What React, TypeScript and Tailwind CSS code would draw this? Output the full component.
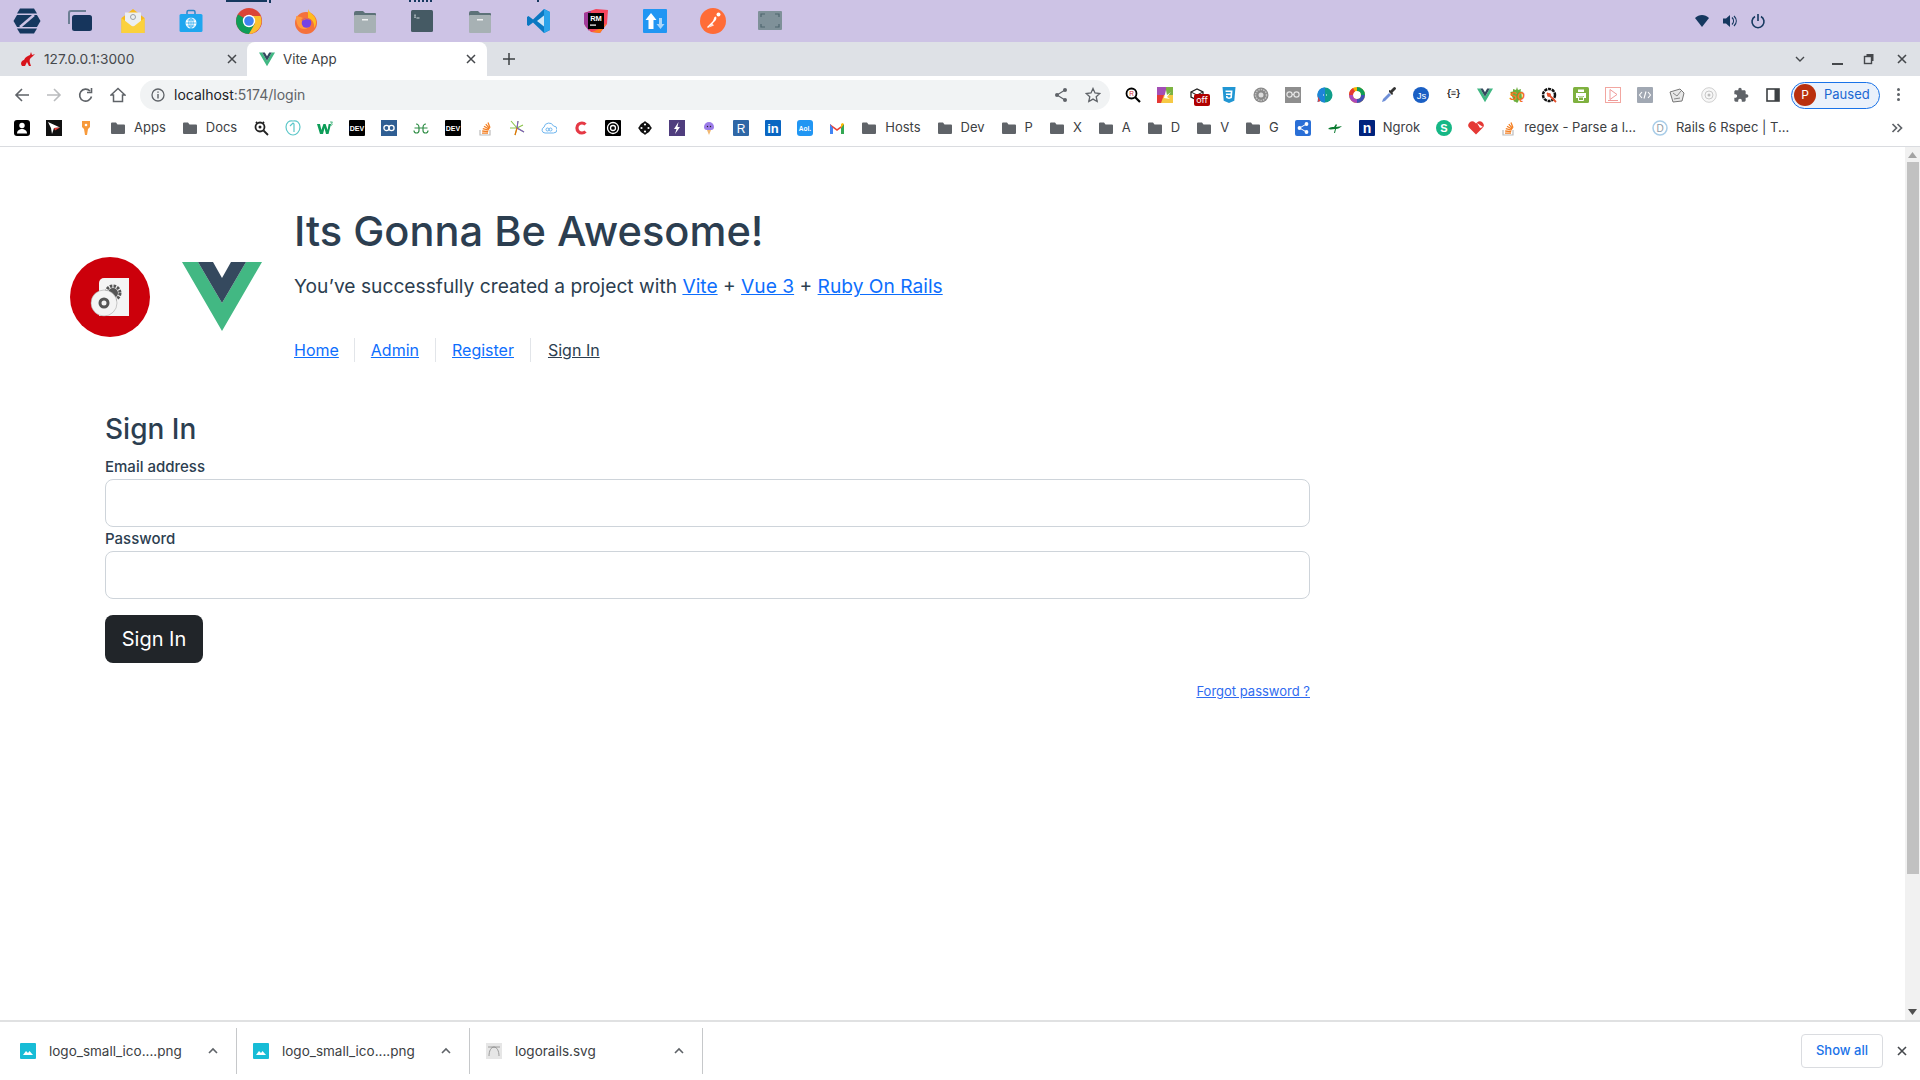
import React from "react";

const S = ({ children, s = 16, v = 16, className = "" }: { children: React.ReactNode; s?: number; v?: number; className?: string }) => (
  <svg width={s} height={s} viewBox={`0 0 ${v} ${v}`} className={"shrink-0 " + className}>{children}</svg>
);

const Folder = () => (
  <S><path d="M1 3.500a1 1 0 0 1 1-1h4l1.500 2H14a1 1 0 0 1 1 1V13a1 1 0 0 1-1 1H2a1 1 0 0 1-1-1z" fill="#5f6368" /></S>
);

const VueMark = ({ s = 16 }: { s?: number }) => (
  <S s={s} v={16}>
    <path d="M0 1.500h3.200L8 9.800l4.800-8.300H16L8 15.300z" fill="#41b883" />
    <path d="M3.200 1.500h2.600L8 5.300l2.200-3.800h2.600L8 9.800z" fill="#34495e" />
  </S>
);

const StackO = () => (
  <S>
    <path d="M3 10v5h10v-5" fill="none" stroke="#bcbbbb" strokeWidth="1.200" />
    <path d="M5 13.200h6M5.200 11l6 .6M5.800 8.600l5.800 1.600M7 6.200l5.200 3M8.800 4.200l3.800 4.400M11 2.400l2 5.400" stroke="#f48024" strokeWidth="1.300" fill="none" />
  </S>
);

const dockWidths = ["w-[54px]", "w-[52px]", "w-[54px]", "w-[62px]", "w-[54px]", "w-[60px]", "w-[58px]", "w-[56px]", "w-[60px]", "w-[58px]", "w-[56px]", "w-[62px]", "w-[54px]", "w-[60px]"];

const dock: React.ReactNode[] = [
  <S s={30} v={30} key="z">
    <path d="M8 2.500h14l3 5H5z" fill="#15385f" />
    <path d="M1.500 15l3.500-6h20l3.500 6-3.500 6H5z" fill="#15385f" />
    <path d="M5 22.500h20l-3 5H8z" fill="#15385f" />
    <path d="M22 9L8 21" stroke="#cdc3e5" strokeWidth="2.500" />
  </S>,
  <S s={26} v={26} key="m">
    <path d="M2 16V5a2 2 0 0 1 2-2h15" fill="none" stroke="#6c7f94" strokeWidth="2" />
    <rect x="5" y="7" width="20" height="16" rx="2.500" fill="#16355c" />
  </S>,
  <S s={26} v={26} key="mail">
    <path d="M1.500 10L13 1l11.500 9v15h-23z" fill="#f5b921" />
    <path d="M5 4.500h16v14H5z" fill="#eceff1" />
    <circle cx="13" cy="9" r="2.500" fill="none" stroke="#9aa0a6" strokeWidth="1" />
    <path d="M1.500 10L13 19l11.500-9v15h-23z" fill="#fbd13d" />
  </S>,
  <S s={26} v={26} key="store">
    <path d="M9 7V4a1.500 1.500 0 0 1 1.500-1.500h5A1.500 1.500 0 0 1 17 4v3" fill="none" stroke="#2a87c9" strokeWidth="1.500" />
    <rect x="1.500" y="6" width="23" height="18" rx="1.500" fill="#1fa6ef" />
    <circle cx="13" cy="15" r="5.500" fill="#fff" />
    <path d="M7.500 15h11M13 9.500v11M9.500 12h7M9.500 18h7M13 9.500c-3 3-3 8 0 11M13 9.500c3 3 3 8 0 11" stroke="#1fa6ef" strokeWidth=".7" fill="none" />
  </S>,
  <S s={26} v={26} key="chrome">
    <circle cx="13" cy="13" r="13" fill="#db4437" />
    <path d="M13 13L2 6.500A13 13 0 0 0 1.500 19 13 13 0 0 0 13 26l6-10z" fill="#0f9d58" />
    <path d="M13 8h11.500A13 13 0 0 1 13 26l6-10.500z" fill="#fbc02d" />
    <circle cx="13" cy="13" r="6.200" fill="#fff" />
    <circle cx="13" cy="13" r="4.800" fill="#3f83f0" />
  </S>,
  <S s={26} v={26} key="ff">
    <circle cx="13" cy="15" r="11" fill="#f5713b" />
    <path d="M15 1c1 4 8 6 8 13 0 3-1 5-2 6 1-5-2-9-6-10z" fill="#ffbc1f" />
    <path d="M3 8c2 1 4 0 7 2-2 1-2 2-1 3 3 2 7 0 8 3 0 3-3 5-6 5-5 0-8-4-8-13z" fill="#ff9b3f" />
    <circle cx="13.500" cy="15" r="4.800" fill="#7542e5" />
    <path d="M9 13c2-3 6-4 9-1-3-1-6-1-9 1z" fill="#ff7a30" />
  </S>,
  <S s={26} v={26} key="files">
    <path d="M2 5a2 2 0 0 1 2-2h7l2 2h10a1 1 0 0 1 1 1v3H2z" fill="#5d7278" />
    <rect x="2" y="7" width="22" height="18" rx="1" fill="#a7b1b4" />
    <rect x="10" y="11" width="6" height="1.500" fill="#eff1f1" />
  </S>,
  <S s={26} v={26} key="term">
    <rect x="2" y="2" width="22" height="22" rx="1.500" fill="#455a64" />
    <path d="M6 6.500v3.500M5.300 7.200h1.500M5.300 9.300h1.500" stroke="#cfd8dc" strokeWidth=".7" />
    <rect x="7.500" y="9.500" width="3" height="1" fill="#cfd8dc" />
  </S>,
  <S s={26} v={26} key="files2">
    <path d="M2 5a2 2 0 0 1 2-2h7l2 2h10a1 1 0 0 1 1 1v3H2z" fill="#5d7278" />
    <rect x="2" y="7" width="22" height="18" rx="1" fill="#a7b1b4" />
    <rect x="10" y="11" width="6" height="1.500" fill="#eff1f1" />
  </S>,
  <S s={26} v={26} key="vs">
    <path d="M18 1l6 3v18l-6 3L7 14.500 2.500 18 1 17v-8l1.500-1L7 11.500z" fill="#0a78c2" />
    <path d="M18 1l6 3v18l-6 3z" fill="#2aa3ea" />
    <path d="M18 7.500L11 13l7 5.500z" fill="#cfe5f6" />
  </S>,
  <S s={26} v={26} key="rm">
    <path d="M1 5l12-4 12 1-1 14-7 9-9-1-6-6z" fill="#f5455c" />
    <path d="M1 5l7-2-2 20-5-7z" fill="#a03a99" />
    <path d="M16 21l8-6-7 10-8-1z" fill="#fc801d" />
    <rect x="5" y="5" width="16" height="16" fill="#000" />
    <text x="13" y="12.500" fontFamily="Liberation Sans" fontWeight="700" fontSize="7.500" fill="#fff" textAnchor="middle">RM</text>
    <rect x="7" y="16.500" width="6" height="1.200" fill="#fff" />
  </S>,
  <S s={26} v={26} key="ud">
    <rect x="1" y="1" width="24" height="24" rx="1" fill="#2196f3" />
    <path d="M9 5l5.500 7H11.500v9h-5v-9H3.500z" fill="#fff" />
    <path d="M18.500 21L14.500 16H17v-6h3v6h2.500z" fill="#a9d6fa" />
  </S>,
  <S s={26} v={26} key="pm">
    <circle cx="13" cy="13" r="13" fill="#ff6c37" />
    <circle cx="18.500" cy="6.500" r="2" fill="#fff" />
    <path d="M16 8.500c1 2 0 4-2 5.500l-6 6-1-1 6-6 1.500-4z" fill="#fff" />
    <path d="M9 19.500l5-2-2-2.500z" fill="#fff" opacity=".8" />
  </S>,
  <S s={26} v={26} key="scr">
    <rect x="1" y="3" width="24" height="19" rx="1" fill="#7f9199" />
    <path d="M4 9V6h4M18 6h4v3M22 16v3h-4M8 19H4v-3" fill="none" stroke="#4e666f" strokeWidth="1.200" />
  </S>,
];

const toolbarIcons: React.ReactNode[] = [
  <S key="1"><circle cx="6.500" cy="6.500" r="5" fill="#fff" stroke="#000" strokeWidth="1.800" /><path d="M10 10l5 5" stroke="#000" strokeWidth="2.200" /><text x="6.500" y="9" fontSize="6.500" fill="#d32f2f" textAnchor="middle" fontFamily="Liberation Sans">R</text></S>,
  <S key="2"><rect width="16" height="16" fill="#f6c945" /><path d="M0 0h9v8H0z" fill="#a34fb5" /><path d="M9 0h7v8H9z" fill="#7cb342" /><path d="M0 8l7 0-3 8H0z" fill="#e53935" /><path d="M7 11l2-8 1 5 4-3-4 5 3 2z" fill="#fff" /></S>,
  <span key="3" className="relative flex w-4 h-4">
    <S><path d="M2 5l6-3 6 3v5l-6 3-6-3z" fill="#fff" stroke="#222" strokeWidth="1.300" /><path d="M2 5l6 3 6-3M8 8v5" stroke="#222" strokeWidth="1" fill="none" /></S>
    <span className="absolute left-[5px] top-[7px] w-4 h-[12px] rounded-[2px] bg-[#b00000] text-white text-[9px] leading-[12px] text-center">off</span>
  </span>,
  <S key="4"><path d="M1.500 0h13l-1.200 13.800L8 16l-5.300-2.200z" fill="#2196d3" /><path d="M4.500 3.500h7l-.6 7.500L8 12l-2.800-1-.2-2h1.600l.1 1L8 10.600l1.400-.6.100-2H5l-.1-1.500h4.700l.1-1.500H4.600z" fill="#fff" /></S>,
  <S key="5"><circle cx="8" cy="8" r="7.500" fill="#8a8a8a" /><circle cx="8" cy="8" r="5.500" fill="none" stroke="#c4c4c4" strokeWidth="1.500" strokeDasharray="1.500 1" /><circle cx="8" cy="8" r="2.500" fill="#ddd" /></S>,
  <S key="6"><rect width="16" height="16" fill="#8e8e8e" /><circle cx="4.500" cy="7.500" r="2.600" fill="none" stroke="#e5e5e5" strokeWidth="1.200" /><circle cx="11.500" cy="7.500" r="2.600" fill="none" stroke="#e5e5e5" strokeWidth="1.200" /><path d="M7 7.500h2" stroke="#e5e5e5" /></S>,
  <S key="7"><circle cx="8" cy="8" r="7.500" fill="#0f9d8a" /><path d="M8 .5A7.500 7.500 0 0 0 1 11l-.5 4 3-1A7.500 7.500 0 0 0 8 15.500z" fill="#1d84d8" /><path d="M.5 9c1 3 1 4 0 6l3-1z" fill="#e53935" /><path d="M6 8h1M9 8h1" stroke="#fff" strokeWidth="1.200" /></S>,
  <S key="8"><circle cx="8" cy="8" r="6" fill="none" stroke="#f4b400" strokeWidth="4" /><path d="M8 0a8 8 0 0 1 8 8h-4a4 4 0 0 0-4-4z" fill="#0f9d58" /><path d="M16 8a8 8 0 0 1-8 8v-4a4 4 0 0 0 4-4z" fill="#3f51b5" /><path d="M8 16a8 8 0 0 1-8-8h4a4 4 0 0 0 4 4z" fill="#ab47bc" /><path d="M0 8a8 8 0 0 1 4-7l2 3.500A4 4 0 0 0 4 8z" fill="#e53935" /></S>,
  <S key="9"><path d="M1 15l1-3 6-6 2 2-6 6z" fill="#6f8fd8" /><path d="M8 5l3 3 1-1-.5-1.500 3-3a1.300 1.300 0 0 0-2-2l-3 3L8 3z" fill="#333" /></S>,
  <S key="10"><circle cx="8" cy="8" r="8" fill="#1a5fc4" /><text x="8.500" y="11.500" fontSize="9.500" fill="#fff" textAnchor="middle" fontFamily="Liberation Sans">Js</text></S>,
  <span key="11" className="font-['Liberation_Mono'] font-bold text-[9px] text-[#222] tracking-[-1px]">{"{≡}"}</span>,
  <VueMark key="12" />,
  <S key="13"><path d="M8 0l1 3 3-1-.5 2.500 3 .5-2 1 .5 6-3 .5L9 15l-1 1-1-1-2-.5-1-2.500-2-6-1-1 3-.5L4 2l3 1z" fill="#6cae3e" /><text x="8" y="12.500" fontSize="10.500" fontWeight="700" fontStyle="italic" fill="#f4711e" textAnchor="middle" fontFamily="Liberation Sans">SQ</text></S>,
  <S key="14"><circle cx="8" cy="8" r="6" fill="#fff" stroke="#111" strokeWidth="2.500" strokeDasharray="3 .8" /><path d="M6 6l9 9" stroke="#e2512d" strokeWidth="1.800" /><circle cx="8" cy="8" r="2" fill="#e2512d" /></S>,
  <S key="15"><rect width="16" height="16" rx="1.500" fill="#7fb13f" /><path d="M3 6h10v5h-2V9H5v2H3z" fill="#fff" /><path d="M5 2.500h6V5H5z" fill="#fff" /><path d="M5.500 10h5v3.500h-5z" fill="none" stroke="#fff" /></S>,
  <S key="16"><rect x=".5" y=".5" width="15" height="15" fill="#fff" stroke="#f2a6a0" /><path d="M5 2.500l7 5-7 5z" fill="none" stroke="#ef9a9a" /><path d="M3 13.500h10" stroke="#ef9a9a" /></S>,
  <S key="17"><rect width="16" height="16" rx="1" fill="#a1a8b3" /><path d="M5 5L2.500 8 5 11M11 5l2.500 3L11 11M9 4.500l-2 7" fill="none" stroke="#fff" strokeWidth="1.100" /></S>,
  <S key="18"><path d="M1 5l10-3 4 4-2 8-9 1z" fill="#e8e8e8" stroke="#777" /><path d="M4 6l4 3 4-5M5 12l6-1" stroke="#888" fill="none" /></S>,
  <S key="19"><circle cx="8" cy="8" r="7.300" fill="#f7f7f7" stroke="#d0d0d0" /><circle cx="8" cy="8" r="4" fill="none" stroke="#c8c8c8" /><circle cx="8" cy="8" r="1.500" fill="#bdbdbd" /></S>,
  <svg key="20" width="16" height="16" viewBox="0 0 24 24"><path d="M20.500 11H19V7c0-1.100-.9-2-2-2h-4V3.500C13 2.120 11.880 1 10.500 1S8 2.120 8 3.500V5H4c-1.100 0-1.990.9-1.990 2v3.800H3.500c1.490 0 2.700 1.210 2.700 2.700s-1.210 2.700-2.700 2.700H2V20c0 1.100.9 2 2 2h3.800v-1.500c0-1.490 1.210-2.700 2.700-2.700 1.490 0 2.700 1.210 2.700 2.700V22H17c1.100 0 2-.9 2-2v-4h1.500c1.380 0 2.500-1.120 2.500-2.500S21.880 11 20.500 11z" fill="#5f6368" /></svg>,
  <S key="21"><rect x="2" y="2" width="12" height="12" fill="none" stroke="#3c4043" strokeWidth="1.600" /><rect x="9.500" y="2" width="4.500" height="12" fill="#3c4043" /></S>,
];

const Bm = ({ children, label }: { children: React.ReactNode; label?: string }) =>
  label ? (
    <div className="flex items-center gap-2 px-2 h-full shrink-0">{children}<span className="text-[13px] text-[#3c4043] whitespace-nowrap">{label}</span></div>
  ) : (
    <div className="flex items-center justify-center w-8 h-full shrink-0">{children}</div>
  );

const tile = (bg: string, txt: string, color = "#fff", fs = 7) => (
  <S><rect width="16" height="16" rx="1" fill={bg} /><text x="8" y={8 + fs * 0.36} fontSize={fs} fontWeight="700" fill={color} textAnchor="middle" fontFamily="Liberation Sans">{txt}</text></S>
);

const Bookmarks = () => (
  <div className="flex items-center h-[30px] pb-[3px] pl-[6px] border-b border-[#dadce0] box-content shrink-0">
    <Bm><S><rect width="16" height="16" rx="3" fill="#000" /><circle cx="8" cy="5.500" r="2.700" fill="#fff" /><path d="M3 13.500c0-6 10-6 10 0z" fill="#fff" /></S></Bm>
    <Bm><S><rect width="16" height="16" fill="#111" /><path d="M2 2l12 5.500-6 .5-2 6-1-6z" fill="#fff" /><path d="M8 8l6-.5-5 3z" fill="#e53935" /></S></Bm>
    <Bm><S><path d="M4 1h8v6l-2 2-1 6H7L6 9 4 7z" fill="#f79a3c" /><circle cx="8" cy="5" r="1.300" fill="#fff" /></S></Bm>
    <Bm label="Apps"><Folder /></Bm>
    <Bm label="Docs"><Folder /></Bm>
    <Bm><S><circle cx="7" cy="7" r="4.500" fill="#fff" stroke="#222" strokeWidth="1.800" /><circle cx="7" cy="7" r="1.500" fill="#222" /><path d="M10.500 10.500l4.500 4.500M3 2l1 1M11 2l-1 1" stroke="#222" strokeWidth="1.800" /></S></Bm>
    <Bm><S><path d="M8 1c4-1 7 2 7 6 0 5-4 8-7 8s-7-3-7-8c0-4 3-7 7-6z" fill="none" stroke="#5cc7c9" strokeWidth="1.200" /><path d="M5 6l3-3 1 1v8" fill="none" stroke="#5cc7c9" strokeWidth="1.200" /></S></Bm>
    <Bm><S><path d="M0 4h3l1.400 6 2-6h2.200l2 6 1.100-6h2.300l-2.500 10H9L7.500 8 6 14H3z" fill="#0d9d58" /><path d="M13 2h2.500l-1.200 1.300a1 1 0 1 1-1 1.500" fill="none" stroke="#0d9d58" strokeWidth=".7" /></S></Bm>
    <Bm>{tile("#000", "DEV")}</Bm>
    <Bm><S><rect width="16" height="16" fill="#2f5e93" /><circle cx="5.500" cy="8" r="2.600" fill="none" stroke="#fff" strokeWidth="1.300" /><circle cx="10.500" cy="8" r="2.600" fill="none" stroke="#fff" strokeWidth="1.300" /></S></Bm>
    <Bm><S><path d="M1 10.500a2.500 2.500 0 0 0 5 0V8H1.500M15 10.500a2.500 2.500 0 0 1-5 0V8h4.500M6 8c0-3-1-4-3-4M10 8c0-3 1-4 3-4M6 8l4 0" fill="none" stroke="#2f8d46" strokeWidth="1.200" /></S></Bm>
    <Bm>{tile("#000", "DEV")}</Bm>
    <Bm><StackO /></Bm>
    <Bm><S><path d="M8 8L2 1M8 8l1-7M8 8l6-3M8 8l7 4M8 8l-2 7M8 8L1 8" stroke="#8bc34a" strokeWidth="1.100" /><path d="M8 8l7 4M8 8l1-7" stroke="#7e57c2" strokeWidth="1.100" /><path d="M8 8l-2 7" stroke="#ef6c00" strokeWidth="1.100" /></S></Bm>
    <Bm><S><path d="M4 13a3 3 0 0 1-1-5.800A5 5 0 0 1 12.500 6 3.500 3.500 0 0 1 12.500 13z" fill="#fff" stroke="#6cb4ee" strokeWidth="1" /><circle cx="6.500" cy="9.500" r="1.500" fill="none" stroke="#6cb4ee" /><circle cx="9.500" cy="9.500" r="1.500" fill="none" stroke="#6cb4ee" /></S></Bm>
    <Bm><S><path d="M12.500 4.500A5 5 0 1 0 12.500 11.500" fill="none" stroke="#e53945" strokeWidth="3.200" /></S></Bm>
    <Bm><S><rect width="16" height="16" rx="1" fill="#000" /><circle cx="8" cy="8" r="5.500" fill="none" stroke="#fff" strokeWidth="1.300" /><circle cx="8" cy="8" r="2.500" fill="none" stroke="#fff" strokeWidth="1.300" /></S></Bm>
    <Bm><S><path d="M8 1l7 7-7 7-7-7z" fill="#111" /><circle cx="8" cy="8" r="5" fill="none" stroke="#111" strokeWidth="1.600" /><circle cx="8" cy="4.500" r="1.100" fill="#fff" /><circle cx="8" cy="11.500" r="1.100" fill="#fff" /><circle cx="4.500" cy="8" r="1.100" fill="#fff" /><circle cx="11.500" cy="8" r="1.100" fill="#fff" /></S></Bm>
    <Bm><S><rect width="16" height="16" fill="#4f3d7e" /><path d="M9.500 2L5 9h2.500L6 14l5-7H8.500z" fill="#fff" /></S></Bm>
    <Bm><S><path d="M3 7a5 5 0 0 1 10 0c0 2-1 3-3 3H6C4 10 3 9 3 7z" fill="#9b7be8" /><path d="M6 10h4l-2 5z" fill="#f2b872" /><circle cx="6.500" cy="6.500" r=".7" fill="#222" /><circle cx="9.500" cy="6.500" r=".7" fill="#222" /></S></Bm>
    <Bm><S><rect width="16" height="16" rx="1" fill="#2f67a6" /><text x="8" y="12.500" fontSize="12" fill="#fff" textAnchor="middle" fontFamily="Liberation Sans">R</text></S></Bm>
    <Bm>{tile("#0a66c2", "in", "#fff", 13)}</Bm>
    <Bm><S><rect width="16" height="16" rx="3" fill="#2196f3" /><text x="8" y="10.500" fontSize="6.500" fontWeight="700" fill="#fff" textAnchor="middle" fontFamily="Liberation Sans">Aol.</text></S></Bm>
    <Bm><S><path d="M1 14V4l7 5 7-5v10h-3V8L8 11 4 8v6z" fill="#ea4335" /><path d="M1 14h3V8L1 4z" fill="#4285f4" /><path d="M12 14h3V4l-3 4z" fill="#34a853" /><path d="M12 8l3-4-1.500-1L12 4z" fill="#fbbc04" /></S></Bm>
    <Bm label="Hosts"><Folder /></Bm>
    <Bm label="Dev"><Folder /></Bm>
    <Bm label="P"><Folder /></Bm>
    <Bm label="X"><Folder /></Bm>
    <Bm label="A"><Folder /></Bm>
    <Bm label="D"><Folder /></Bm>
    <Bm label="V"><Folder /></Bm>
    <Bm label="G"><Folder /></Bm>
    <Bm><S><rect width="16" height="16" rx="2" fill="#2a6fd6" /><circle cx="4.500" cy="8" r="1.900" fill="#fff" /><circle cx="11.500" cy="4" r="1.900" fill="#fff" /><circle cx="11.500" cy="12" r="1.900" fill="#fff" /><path d="M4.500 8l7-4M4.500 8l7 4" stroke="#fff" /></S></Bm>
    <Bm><S><path d="M1 9c2-2 4-2 6-2l2-3 1 1-1 2c2 0 5-1 6-1-2 2-4 3-6 3l-1 4H7l1-4c-2 0-4 1-7 0z" fill="#0a7a2f" /></S></Bm>
    <Bm>{tile("#00237d", "n", "#fff", 14)}</Bm>
    <div className="flex items-center pr-2 shrink-0"><span className="text-[13px] text-[#3c4043]">Ngrok</span></div>
    <Bm><S><circle cx="8" cy="8" r="8" fill="#16b785" /><text x="8" y="12" fontSize="11" fontWeight="700" fill="#fff" textAnchor="middle" fontFamily="Liberation Sans">S</text></S></Bm>
    <Bm><S><path d="M8 14.500L1.500 8a3.800 3.800 0 0 1 5.500-5.500L8 3.500l1-1A3.800 3.800 0 0 1 14.500 8z" fill="#e53935" /><path d="M9 3l6 4-3 1z" fill="#fff" /></S></Bm>
    <Bm label="regex - Parse a l..."><StackO /></Bm>
    <Bm label="Rails 6 Rspec | T..."><S><circle cx="8" cy="8" r="7" fill="none" stroke="#a9cde8" strokeWidth="1.500" /><text x="8" y="11.500" fontSize="10" fill="#8e9aa4" textAnchor="middle" fontFamily="Liberation Sans">D</text></S></Bm>
    <div className="flex-1" />
    <svg width="12" height="10" viewBox="0 0 12 10" className="mr-[17px] shrink-0"><path d="M1.500 1l4 4-4 4M6.500 1l4 4-4 4" fill="none" stroke="#5f6368" strokeWidth="1.700" /></svg>
  </div>
);

const ChevUp = () => (
  <svg width="12" height="12" viewBox="0 0 12 12" className="shrink-0"><path d="M2 8l4-4 4 4" fill="none" stroke="#5f6368" strokeWidth="1.600" /></svg>
);

const PngIcon = () => (
  <S><rect width="16" height="16" rx="1" fill="#17bcd6" /><path d="M3 12l3-4 2 2 1.500-2 3.500 4z" fill="#fff" /></S>
);

const Dl = ({ name, icon, first }: { name: string; icon: React.ReactNode; first?: boolean }) => (
  <div className={(first ? "w-[237px] pl-[20px]" : "w-[233px] pl-[16px]") + " flex items-center h-[46px] border-r border-[#c6c8ca] pr-[17px] shrink-0"}>
    {icon}
    <span className="ml-[13px] flex-1 text-[13.500px] text-[#3c4043] whitespace-nowrap">{name}</span>
    <ChevUp />
  </div>
);

export default function App() {
  return (
    <div className="h-screen w-screen flex flex-col overflow-hidden bg-white font-[Inter,sans-serif]">
      {/* desktop bar */}
      <div className="relative h-[42px] bg-[#cdc3e5] flex items-center shrink-0">
        <span className="absolute left-[226px] top-0 w-[41px] h-[2px] bg-[#15385f]" />
        <span className="absolute left-[269px] top-0 w-[2px] h-[3px] bg-[#15385f]" />
        <span className="absolute left-[409px] top-0 w-[23px] h-[2px] border-t-2 border-dotted border-[#15385f]" />
        <span className="absolute left-[537px] top-0 w-[2px] h-[2px] bg-[#15385f]" />
        <div className="flex items-center">
          {dock.map((d, i) => (
            <div key={i} className={dockWidths[i] + " flex justify-center items-center shrink-0"}>{d}</div>
          ))}
        </div>
        <div className="flex-1" />
        <div className="flex items-center gap-[12px] mr-[154px]">
          <svg width="16" height="16" viewBox="0 0 16 16"><path d="M1 5c4-4 10-4 14 0L8 14z" fill="#15385f" /></svg>
          <svg width="16" height="16" viewBox="0 0 16 16"><path d="M1 5.500h3L8 2v12l-4-3.500H1z" fill="#15385f" /><path d="M10 4.500c2 2 2 5 0 7M12 3c3 3 3 7 0 10" fill="none" stroke="#15385f" strokeWidth="1.200" /></svg>
          <svg width="16" height="16" viewBox="0 0 16 16"><path d="M5 3.500a6 6 0 1 0 6 0M8 1v7" fill="none" stroke="#15385f" strokeWidth="1.600" /></svg>
        </div>
      </div>
      {/* tab strip */}
      <div className="h-[34px] bg-[#dee1e6] flex items-stretch shrink-0 text-[13.300px] text-[#3c4043]">
        <div className="w-[247px] flex items-center pl-[20px] pr-[10px]">
          <S><path d="M1 13c0-3 2-4 3-4 1-3 4-4 6-5l1-3 1 3 3-1-3 3c-2 1-3 3-2 6l1 3H9l-2-4-2 4H2z" fill="#d8131b" /></S>
          <span className="ml-[8px] flex-1 text-[#45484c] text-[13.700px] pt-[1px]">127.0.0.1:3000</span>
          <svg width="10" height="10" viewBox="0 0 10 10"><path d="M1 1l8 8M9 1l-8 8" stroke="#45484c" strokeWidth="1.500" /></svg>
        </div>
        <div className="relative w-[240px] bg-white rounded-t-[8px] flex items-center pl-[12px] pr-[11px]">
          <VueMark />
          <span className="ml-[8px] flex-1 pt-[1px]">Vite App</span>
          <svg width="10" height="10" viewBox="0 0 10 10"><path d="M1 1l8 8M9 1l-8 8" stroke="#45484c" strokeWidth="1.500" /></svg>
        </div>
        <div className="flex items-center ml-[16px]">
          <svg width="12" height="12" viewBox="0 0 12 12"><path d="M6 0v12M0 6h12" stroke="#3c4043" strokeWidth="1.500" /></svg>
        </div>
        <div className="flex-1" />
        <div className="flex items-center pr-[12px]">
          <svg width="12" height="12" viewBox="0 0 12 12"><path d="M2 4l4 4 4-4" fill="none" stroke="#45484c" strokeWidth="1.400" /></svg>
          <div className="w-[11px] h-[12px] ml-[26px] flex items-end"><div className="w-[11px] h-[2px] bg-[#45484c]" /></div>
          <svg width="12" height="12" viewBox="0 0 12 12" className="ml-[20px]"><path d="M3.500 1h7v7h-2V3.500H3.500z" fill="#45484c" /><rect x="1.500" y="3.500" width="7" height="7" fill="none" stroke="#45484c" strokeWidth="1.400" /></svg>
          <svg width="12" height="12" viewBox="0 0 12 12" className="ml-[21px]"><path d="M2 2l8 8M10 2l-8 8" stroke="#45484c" strokeWidth="1.600" /></svg>
        </div>
      </div>
      {/* toolbar */}
      <div className="h-[37px] flex items-center shrink-0 bg-white">
        <div className="flex items-center w-[134px] shrink-0 pl-[6px]">
          <div className="w-8 flex justify-center"><svg width="16" height="16" viewBox="0 0 16 16"><path d="M15 8H2M8 2L2 8l6 6" fill="none" stroke="#5f6368" strokeWidth="1.600" /></svg></div>
          <div className="w-8 flex justify-center"><svg width="16" height="16" viewBox="0 0 16 16"><path d="M1 8h13M8 2l6 6-6 6" fill="none" stroke="#babcbe" strokeWidth="1.600" /></svg></div>
          <div className="w-8 flex justify-center"><svg width="16" height="16" viewBox="0 0 16 16"><path d="M13.500 9.500A6 6 0 1 1 12 4M13.500 1v4.500H9" fill="none" stroke="#5f6368" strokeWidth="1.600" /></svg></div>
          <div className="w-8 flex justify-center"><svg width="16" height="16" viewBox="0 0 16 16"><path d="M1 8l7-6.500L15 8h-2.500v6.500h-9V8z" fill="none" stroke="#5f6368" strokeWidth="1.500" /></svg></div>
        </div>
        <div className="h-[30px] ml-[6px] w-[970px] bg-[#f1f3f4] rounded-full flex items-center pl-[11px] pr-[9px] shrink-0 self-end mb-[3px]">
          <svg width="14" height="14" viewBox="0 0 14 14" className="shrink-0"><circle cx="7" cy="7" r="6" fill="none" stroke="#5f6368" strokeWidth="1.300" /><path d="M7 6v4.500M7 3.500v1.300" stroke="#5f6368" strokeWidth="1.400" /></svg>
          <span className="ml-[9px] text-[14px] text-[#202124] pb-[2px]">localhost<span className="text-[#5f6368]">:5174/login</span></span>
          <div className="flex-1" />
          <svg width="16" height="16" viewBox="0 0 16 16" className="mr-[16px]"><path d="M12 3L4 8l8 5" fill="none" stroke="#5f6368" strokeWidth="1.200" /><circle cx="12" cy="3" r="2" fill="#5f6368" /><circle cx="4" cy="8" r="2" fill="#5f6368" /><circle cx="12" cy="13" r="2" fill="#5f6368" /></svg>
          <svg width="16" height="16" viewBox="0 0 16 16"><path d="M8 1.500l2 4.500 4.800.5-3.600 3.200 1 4.800L8 12.100l-4.200 2.400 1-4.800L1.200 6.500 6 6z" fill="none" stroke="#5f6368" strokeWidth="1.300" /></svg>
        </div>
        <div className="flex items-center ml-[7px]">
          {toolbarIcons.map((d, i) => (
            <div key={i} className="w-8 h-8 flex items-center justify-center shrink-0">{d}</div>
          ))}
        </div>
        <div className="ml-[2px] mt-[1px] h-[27px] w-[89px] rounded-full border border-[#1a73e8] bg-[#eaf1fb] flex items-center pl-[2px] shrink-0">
          <div className="w-[22px] h-[22px] rounded-full bg-[#b9300e] text-white text-[12px] flex items-center justify-center">P</div>
          <span className="ml-[8px] text-[13px] text-[#1a67d2]">Paused</span>
        </div>
        <div className="ml-[17px] flex flex-col gap-[2px]">
          <span className="w-[3px] h-[3px] rounded-full bg-[#5f6368]" />
          <span className="w-[3px] h-[3px] rounded-full bg-[#5f6368]" />
          <span className="w-[3px] h-[3px] rounded-full bg-[#5f6368]" />
        </div>
      </div>
      <Bookmarks />
      {/* page */}
      <div className="flex-1 flex min-h-0">
        <div className="flex-1 min-w-0 pl-[70px] pt-[60px]">
          <div className="flex items-center">
            <div className="mt-[25px] flex items-center shrink-0">
              <div className="w-[80px] h-[80px] rounded-full bg-[#cc000b] flex items-center justify-center shrink-0">
                <svg width="40" height="40" viewBox="0 0 40 40">
                  <path d="M9 6a5 5 0 0 1 5-5h25v38H9z" fill="#f4f4f4" />
                  <circle cx="23" cy="16" r="7" fill="none" stroke="#555" strokeWidth="3" strokeDasharray="2.500 1.200" />
                  <circle cx="23" cy="16" r="5" fill="#555" />
                  <circle cx="14" cy="26" r="13" fill="#f4f4f4" stroke="#999" strokeWidth=".5" />
                  <circle cx="14" cy="26" r="4" fill="none" stroke="#555" strokeWidth="3" />
                </svg>
              </div>
              <svg width="80" height="70" viewBox="0 0 80 70" className="ml-[32px] shrink-0">
                <path d="M0 0h16l24 41L64 0h16L40 69z" fill="#42b883" />
                <path d="M16 0h15l9 16 9-16h15L40 41z" fill="#35495e" />
              </svg>
            </div>
            <div className="ml-[32px] text-[#2c3e50]">
              <h1 className="text-[41.600px] leading-[48px] font-medium">Its Gonna Be Awesome!</h1>
              <p className="mt-[16px] text-[19.200px] leading-[30px]">You’ve successfully created a project with <a className="text-[#0d6efd] underline">Vite</a> + <a className="text-[#0d6efd] underline">Vue 3</a> + <a className="text-[#0d6efd] underline">Ruby On Rails</a></p>
              <nav className="mt-[37px] flex text-[16px] leading-[24px]">
                <a className="pr-[15px] text-[#0d6efd] underline">Home</a>
                <a className="px-4 border-l border-[#e2e5e9] text-[#0d6efd] underline">Admin</a>
                <a className="px-4 border-l border-[#e2e5e9] text-[#0d6efd] underline">Register</a>
                <a className="pl-[17px] border-l border-[#e2e5e9] underline">Sign In</a>
              </nav>
            </div>
          </div>
          <form className="ml-[35px] w-[1205px] mt-[50px] text-[#2c3e50]">
            <h2 className="text-[28px] leading-[34px] font-medium">Sign In</h2>
            <label className="block mt-[10px] mb-[1px] text-[15px] leading-[22px] font-medium">Email address</label>
            <input className="block w-full h-[48px] border border-[#ced4da] rounded-[8px] bg-white" />
            <label className="block mt-[1px] mb-[1px] text-[15px] leading-[22px] font-medium">Password</label>
            <input className="block w-full h-[48px] border border-[#ced4da] rounded-[8px] bg-white" />
            <button type="button" className="block mt-[16px] w-[98px] h-[48px] rounded-[8px] bg-[#212529] text-white text-[20px]">Sign In</button>
            <div className="mt-[20px] flex justify-end"><a className="text-[13px] leading-[16px] text-[#2f6bf0] underline">Forgot password ?</a></div>
          </form>
        </div>
        <div className="w-[15px] bg-[#f1f1f1] flex flex-col items-center shrink-0">
          <svg width="9" height="6" viewBox="0 0 9 6" className="mt-[5px] shrink-0"><path d="M4.500 0L9 6H0z" fill="#a3a3a3" /></svg>
          <div className="mt-[4px] w-[12px] h-[712px] bg-[#c1c1c1] shrink-0" />
          <div className="flex-1" />
          <svg width="9" height="6" viewBox="0 0 9 6" className="mb-[5px] shrink-0"><path d="M4.500 6L9 0H0z" fill="#505050" /></svg>
        </div>
      </div>
      {/* downloads */}
      <div className="h-[60px] border-t-2 border-[#e0e1e2] bg-white flex items-center shrink-0 box-border">
        <Dl first name="logo_small_ico....png" icon={<PngIcon />} />
        <Dl name="logo_small_ico....png" icon={<PngIcon />} />
        <Dl name="logorails.svg" icon={<S><rect width="16" height="16" fill="#e6e6e6" /><path d="M3 13c0-5 2-9 5-9s5 4 5 9M2 4h12" fill="none" stroke="#888" strokeWidth=".8" /></S>} />
        <div className="flex-1" />
        <button type="button" className="h-[34px] w-[82px] rounded-[4px] border border-[#dadce0] text-[13px] font-medium text-[#1a73e8]">Show all</button>
        <svg width="12" height="12" viewBox="0 0 12 12" className="ml-[13px] mr-[12px] shrink-0"><path d="M2 2l8 8M10 2l-8 8" stroke="#45484c" strokeWidth="1.600" /></svg>
      </div>
    </div>
  );
}
